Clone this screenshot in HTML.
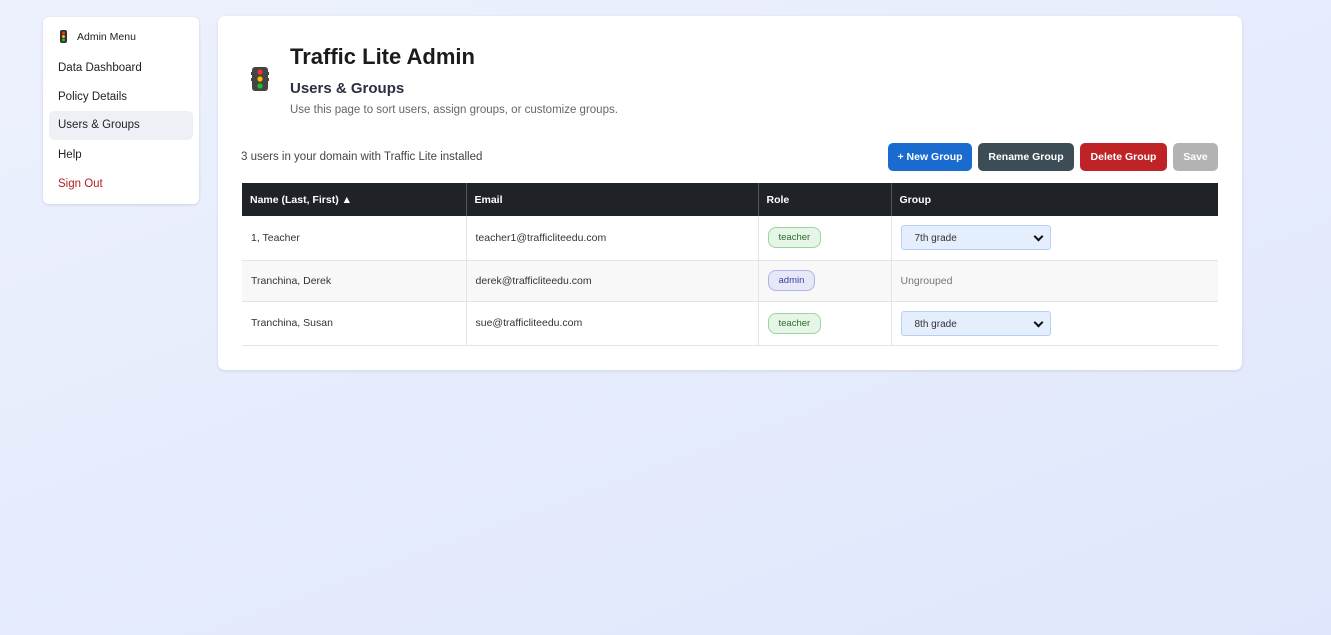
<!DOCTYPE html><html><head><style>
*{box-sizing:border-box;margin:0;padding:0}
body{width:1331px;height:635px;overflow:hidden;background:linear-gradient(160deg,#edf1fd,#dfe7fc);font-family:"Liberation Sans",sans-serif;color:#222;position:relative}
.side{position:absolute;left:43px;top:17px;width:156px;height:187px;background:#fff;border-radius:6px;box-shadow:0 1px 3px rgba(0,0,0,.12)}
.side .it{position:absolute;left:6px;width:144px;height:29px;padding-left:9px;line-height:29px;font-size:11.5px;color:#222;border-radius:5px}
.main{position:absolute;left:218px;top:16px;width:1024px;height:354px;background:#fff;border-radius:7px;box-shadow:0 1px 3px rgba(0,0,0,.1)}
.btn{position:absolute;top:127px;height:28px;border-radius:5px;color:#fff;font-size:10.5px;font-weight:bold;line-height:28px;text-align:center}
table{position:absolute;left:24px;top:167px;width:976px;border-collapse:collapse;font-size:10.5px}
th{background:#1f2226;color:#fff;text-align:left;height:33px;padding-left:8px;font-size:10.5px;border-left:1px solid #555}
td{padding-left:9px;border-bottom:1px solid #e4e4e4;border-left:1px solid #e4e4e4;color:#333}
th:first-child,td:first-child{border-left:none}
.b{display:inline-block;padding:0 10px;height:21px;line-height:19px;border-radius:8px;font-size:9.5px}
.t{background:#e5f5e6;border:1px solid #9bd59e;color:#2e6b32}
.a{background:#e6e8f8;border:1px solid #aeb4e6;color:#3a43a0}
.sel{width:150px;height:25px;background:#e4eefd;border:1px solid #b5cff7;border-radius:3px;font-size:10px;line-height:25px;padding-left:13px;position:relative;color:#333}
.sel:after{content:"";position:absolute;right:8px;top:7px;width:5px;height:5px;border-right:2px solid #111;border-bottom:2px solid #111;transform:rotate(45deg)}
</style></head><body>
<div class="side">
<div class="it" style="top:6px;font-size:10.5px;padding-left:28px">Admin Menu</div>
<svg style="position:absolute;left:17px;top:13px" width="7" height="13"><rect width="7" height="13" rx="2" fill="#333"/><circle cx="3.5" cy="3" r="1.5" fill="#e33"/><circle cx="3.5" cy="6.5" r="1.5" fill="#fb0"/><circle cx="3.5" cy="10" r="1.5" fill="#2b2"/></svg>
<div class="it" style="top:37px">Data Dashboard</div>
<div class="it" style="top:66px">Policy Details</div>
<div class="it" style="top:94px;background:#eff0f5">Users &amp; Groups</div>
<div class="it" style="top:124px">Help</div>
<div class="it" style="top:153px;color:#b81c1c">Sign Out</div>
</div>
<div class="main">
<svg style="position:absolute;left:33px;top:51px" width="18" height="24"><rect x="1" y="0" width="16" height="24" rx="3" fill="#444"/><rect x="0" y="5" width="18" height="3" fill="#444"/><rect x="0" y="11" width="18" height="3" fill="#444"/><circle cx="9" cy="5" r="2.6" fill="#e33"/><circle cx="9" cy="12" r="2.6" fill="#fb0"/><circle cx="9" cy="19" r="2.6" fill="#2b2"/></svg>
<div style="position:absolute;left:72px;top:28px;font-size:22px;font-weight:bold;color:#1b1b1b">Traffic Lite Admin</div>
<div style="position:absolute;left:72px;top:64px;font-size:15px;font-weight:bold;color:#2a3040">Users &amp; Groups</div>
<div style="position:absolute;left:72px;top:88px;font-size:11.5px;color:#666">Use this page to sort users, assign groups, or customize groups.</div>
<div style="position:absolute;left:23px;top:135px;font-size:11.5px;color:#444">3 users in your domain with Traffic Lite installed</div>
<div class="btn" style="left:670px;width:84px;background:#1a6bd0">+ New Group</div>
<div class="btn" style="left:760px;width:96px;background:#3c4d55">Rename Group</div>
<div class="btn" style="left:862px;width:87px;background:#c02325">Delete Group</div>
<div class="btn" style="left:955px;width:45px;background:#b3b3b3">Save</div>
<table>
<tr><th style="width:224px">Name (Last, First) ▲</th><th style="width:292px">Email</th><th style="width:133px">Role</th><th>Group</th></tr>
<tr style="height:44px"><td>1, Teacher</td><td>teacher1@trafficliteedu.com</td><td><span class="b t">teacher</span></td><td><div class="sel">7th grade</div></td></tr>
<tr style="height:41px;background:#f8f8f8"><td>Tranchina, Derek</td><td>derek@trafficliteedu.com</td><td><span class="b a">admin</span></td><td style="color:#777">Ungrouped</td></tr>
<tr style="height:44px"><td>Tranchina, Susan</td><td>sue@trafficliteedu.com</td><td><span class="b t">teacher</span></td><td><div class="sel">8th grade</div></td></tr>
</table>
</div>
</body></html>
